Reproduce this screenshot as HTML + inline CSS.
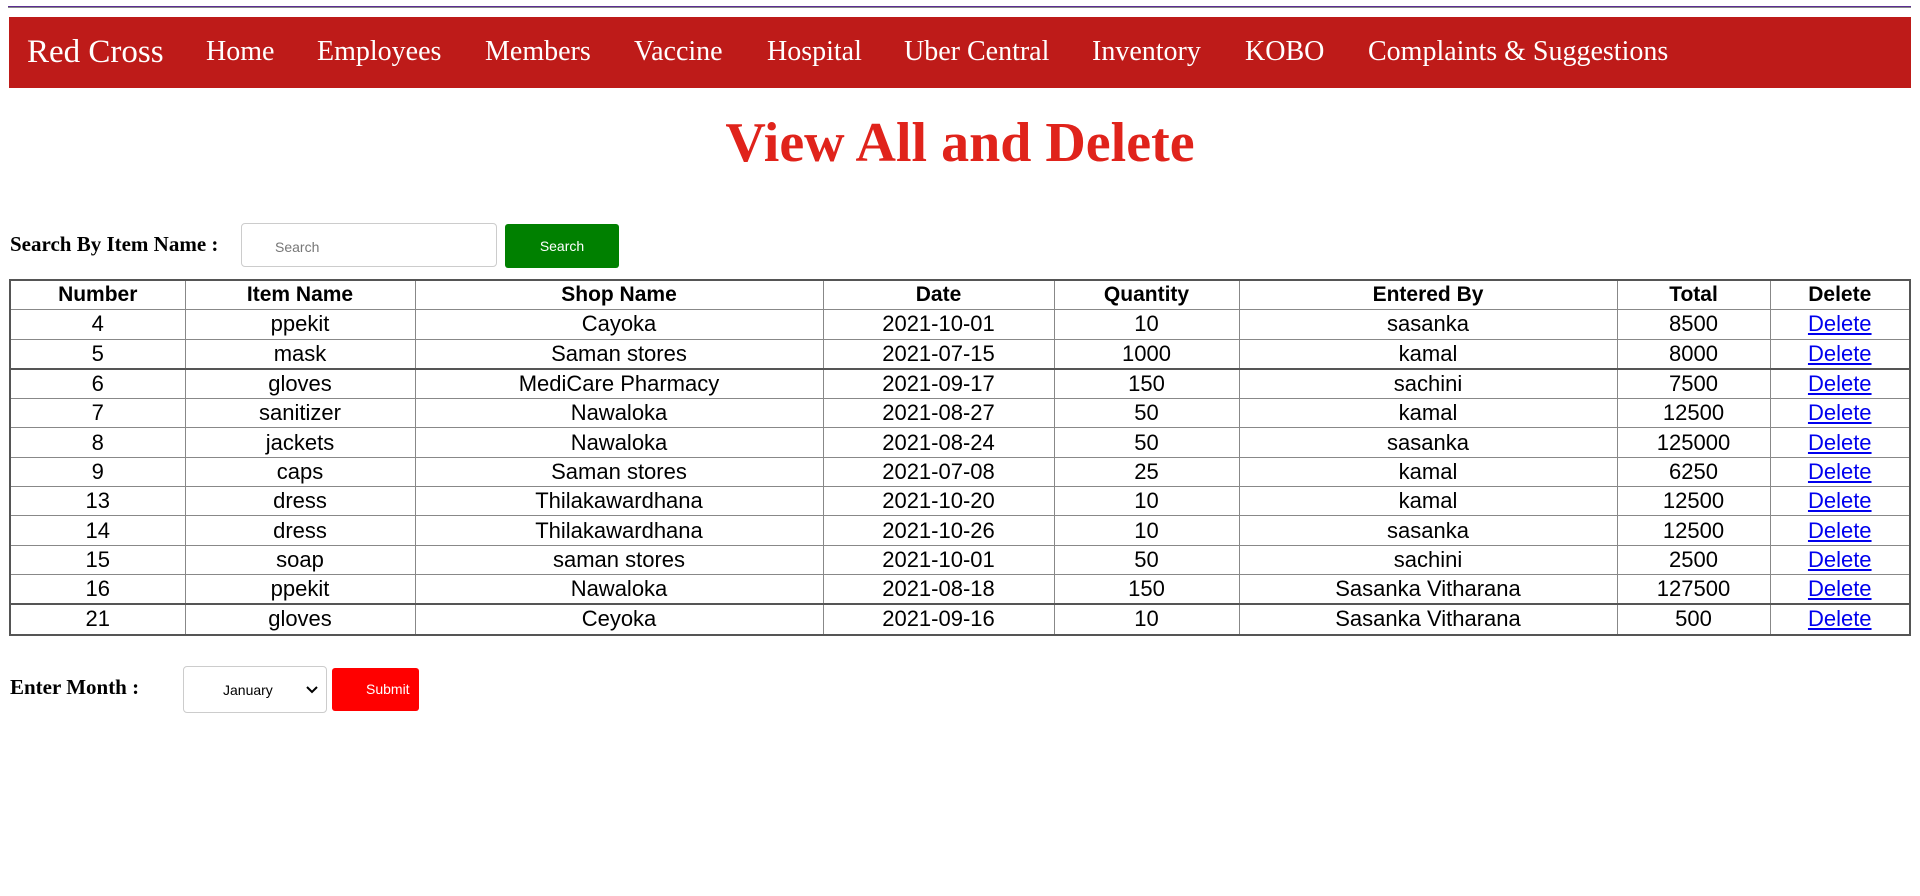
<!DOCTYPE html>
<html><head><meta charset="utf-8"><style>
body{margin:0;width:1920px;height:896px;background:#fff;position:relative;overflow:hidden;font-family:"Liberation Serif",serif}
.line{position:absolute;left:8px;top:6px;width:1903px;height:1px;background:#5b2d92;border-bottom:1px solid #888}
.nav{position:absolute;left:9px;top:17px;width:1902px;height:71px;background:#be1b19;color:#fff}
.nav span{position:absolute;top:0;line-height:70px;font-size:28px;white-space:nowrap}
.nav .brand{font-size:33px;left:18px}
h1{position:absolute;top:108px;left:0;width:1920px;margin:0;text-align:center;color:#e0231b;font-size:56px;font-weight:bold;line-height:70px}
.lbl{position:absolute;left:10px;font-weight:bold;font-size:21px}
.inp{position:absolute;left:241px;top:223px;width:256px;height:44px;border:1px solid #ccc;border-radius:4px;box-sizing:border-box;font:14px "Liberation Sans",sans-serif;color:#777;padding:15px 0 0 33px}
.btn{position:absolute;font:14px "Liberation Sans",sans-serif;color:#fff;text-align:center;border-radius:3px}
table{position:absolute;left:9px;top:279px;width:1902px;border-collapse:collapse;border:2px solid #555;font:22px "Liberation Sans",sans-serif;table-layout:fixed}
td,th{border:1px solid #888;text-align:center;height:28.3px;padding:0;line-height:28px}
th{font-weight:bold;font-size:21px}
tr.t td{border-top:2px solid #555}
a{color:#0000ee;text-decoration:underline}
.sel{position:absolute;left:183px;top:666px;width:144px;height:47px;border:1px solid #ccc;border-radius:4px;box-sizing:border-box;font:14px "Liberation Sans",sans-serif;padding:15px 0 0 39px}
</style></head><body>
<div class="line"></div>
<div class="nav">
<span class="brand">Red Cross</span>
<span style="left:197px">Home</span>
<span style="left:308px">Employees</span>
<span style="left:476px">Members</span>
<span style="left:625px">Vaccine</span>
<span style="left:758px">Hospital</span>
<span style="left:895px">Uber Central</span>
<span style="left:1083px">Inventory</span>
<span style="left:1236px">KOBO</span>
<span style="left:1359px">Complaints &amp; Suggestions</span>
</div>
<h1>View All and Delete</h1>
<div class="lbl" style="top:232px">Search By Item Name :</div>
<div class="inp">Search</div>
<div class="btn" style="left:505px;top:224px;width:114px;height:44px;line-height:44px;background:#008000">Search</div>
<table>
<colgroup><col style="width:175px"><col style="width:230px"><col style="width:408px"><col style="width:231px"><col style="width:185px"><col style="width:378px"><col style="width:153px"><col></colgroup>
<tr><th>Number</th><th>Item Name</th><th>Shop Name</th><th>Date</th><th>Quantity</th><th>Entered By</th><th>Total</th><th>Delete</th></tr>
<tr><td>4</td><td>ppekit</td><td>Cayoka</td><td>2021-10-01</td><td>10</td><td>sasanka</td><td>8500</td><td><a>Delete</a></td></tr>
<tr><td>5</td><td>mask</td><td>Saman stores</td><td>2021-07-15</td><td>1000</td><td>kamal</td><td>8000</td><td><a>Delete</a></td></tr>
<tr class="t"><td>6</td><td>gloves</td><td>MediCare Pharmacy</td><td>2021-09-17</td><td>150</td><td>sachini</td><td>7500</td><td><a>Delete</a></td></tr>
<tr><td>7</td><td>sanitizer</td><td>Nawaloka</td><td>2021-08-27</td><td>50</td><td>kamal</td><td>12500</td><td><a>Delete</a></td></tr>
<tr><td>8</td><td>jackets</td><td>Nawaloka</td><td>2021-08-24</td><td>50</td><td>sasanka</td><td>125000</td><td><a>Delete</a></td></tr>
<tr><td>9</td><td>caps</td><td>Saman stores</td><td>2021-07-08</td><td>25</td><td>kamal</td><td>6250</td><td><a>Delete</a></td></tr>
<tr><td>13</td><td>dress</td><td>Thilakawardhana</td><td>2021-10-20</td><td>10</td><td>kamal</td><td>12500</td><td><a>Delete</a></td></tr>
<tr><td>14</td><td>dress</td><td>Thilakawardhana</td><td>2021-10-26</td><td>10</td><td>sasanka</td><td>12500</td><td><a>Delete</a></td></tr>
<tr><td>15</td><td>soap</td><td>saman stores</td><td>2021-10-01</td><td>50</td><td>sachini</td><td>2500</td><td><a>Delete</a></td></tr>
<tr><td>16</td><td>ppekit</td><td>Nawaloka</td><td>2021-08-18</td><td>150</td><td>Sasanka Vitharana</td><td>127500</td><td><a>Delete</a></td></tr>
<tr class="t"><td>21</td><td>gloves</td><td>Ceyoka</td><td>2021-09-16</td><td>10</td><td>Sasanka Vitharana</td><td>500</td><td><a>Delete</a></td></tr>
</table>
<div class="lbl" style="top:675px">Enter Month :</div>
<div class="sel">January<svg style="position:absolute;right:8px;top:19px" width="12" height="8" viewBox="0 0 12 8"><path d="M1 1l5 5 5-5" fill="none" stroke="#000" stroke-width="2"/></svg></div>
<div class="btn" style="left:332px;top:668px;width:87px;height:43px;line-height:43px;background:#f00;text-align:left;padding-left:34px;box-sizing:border-box">Submit</div>
</body></html>
